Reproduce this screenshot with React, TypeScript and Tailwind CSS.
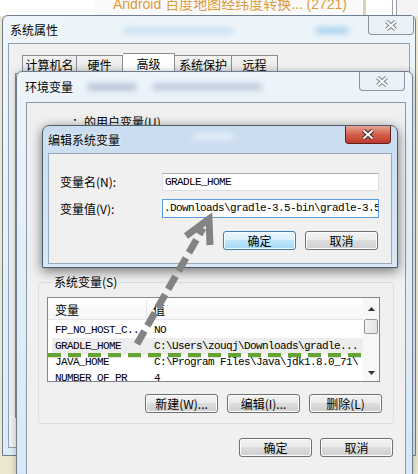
import React from 'react';

const CloseGlyph: React.FC<{ outline: string }> = ({ outline }) => (
  <svg width="14" height="11" viewBox="0 0 14 11">
    <path d="M2.5 1.5 L11.5 9.5 M11.5 1.5 L2.5 9.5" stroke={outline} strokeWidth="4" />
    <path d="M2.5 1.5 L11.5 9.5 M11.5 1.5 L2.5 9.5" stroke="#ffffff" strokeWidth="2" />
  </svg>
);

const Button: React.FC<{ label: string; primary?: boolean; h?: string }> = ({ label, primary, h = 'h-[19px]' }) => (
  <div
    className={
      primary
        ? `flex w-[73px] ${h} items-center justify-center rounded-[3px] border border-[#3c7fb1] bg-[linear-gradient(#eaf6fd_0%,#d9f0fc_45%,#bee6fd_50%,#a7d9f5_100%)] shadow-[inset_0_0_0_1px_#f4fbff] leading-none`
        : `flex w-[73px] ${h} items-center justify-center rounded-[3px] border border-[#707070] bg-[linear-gradient(#f2f2f2_0%,#ebebeb_45%,#dddddd_50%,#cfcfcf_100%)] shadow-[inset_0_0_0_1px_#fcfcfc] leading-none`
    }
  >
    {label}
  </div>
);

const rows = [
  { name: 'FP_NO_HOST_C..', value: 'NO' },
  { name: 'GRADLE_HOME', value: 'C:\\Users\\zouqj\\Downloads\\gradle...', selected: true },
  { name: 'JAVA_HOME', value: 'C:\\Program Files\\Java\\jdk1.8.0_71\\' },
  { name: 'NUMBER_OF_PR', value: '4' },
];

const mono = "font-['Liberation_Mono','Noto_Sans_CJK_SC',monospace] text-[11px] tracking-[-0.6px]";

export default function App() {
  return (
    <div className="relative flex h-[474px] w-[418px] flex-col overflow-hidden bg-[#ebe7d0] font-['Noto_Sans_CJK_SC',sans-serif] text-[12px] text-black">
      {/* desktop behind the windows */}
      <div className="flex h-[16px] bg-white">
        <div className="w-[95px]" />
        <div className="flex w-[268px] overflow-hidden bg-[#fafafa]">
          <span className="-mt-[4px] ml-[18px] font-['Liberation_Sans','Noto_Sans_CJK_SC',sans-serif] text-[14px] leading-[16px] text-[#dc9b3a]">
            Android 百度地图经纬度转换...
          </span>
          <span className="-mt-[4px] ml-auto mr-[16px] font-['Liberation_Sans',sans-serif] text-[14px] leading-[16px] text-[#dc9b3a]">
            (2721)
          </span>
        </div>
        <div className="w-[3px] bg-[#d9d3a9]" />
        <div className="w-[26px] bg-white" />
        <div className="w-px bg-[#9aa0a8]" />
        <div className="w-[3px] bg-white" />
        <div className="w-px bg-[#9aa0a8]" />
        <div className="flex-1 bg-[#f4f4f4]" />
      </div>
      <div className="flex-1" />

      {/* 系统属性 */}
      <div className="absolute left-[2px] top-[15px] flex h-[441px] w-[414px] flex-col rounded-t-[6px] border border-[#6e7e8e] bg-[linear-gradient(#eef5fa,#dcebf6)]">
        <div className="relative flex h-[27px] items-center pl-[7px]">
          <span className="[text-shadow:0_0_6px_#ffffff]">系统属性</span>
          <div className="absolute left-[120px] top-[12px] h-[5px] w-[110px] rounded-full bg-[#b8d8ee] blur-[3px]" />
          <div className="absolute left-[312px] top-[12px] h-[5px] w-[34px] rounded-full bg-[#8fc5ea] blur-[3px]" />
          <div className="absolute right-[1px] top-0 flex h-[19px] w-[46px] items-center justify-center rounded-b-[4px] border border-t-0 border-[#8a949e] bg-[#eaf2f8]">
            <CloseGlyph outline="#7a7f86" />
          </div>
        </div>
        <div className="mx-[5px] flex h-[405px] flex-col border border-[#8ea0b4] bg-[#f0f0f0] pt-[9px]">
          <div className="flex items-end pl-[13px]">
            <div className="flex h-[18px] w-[55px] items-center justify-center border border-b-0 border-[#898c95] bg-[linear-gradient(#f3f3f3,#e3e3e3)]">计算机名</div>
            <div className="flex h-[18px] w-[46px] items-center justify-center border border-b-0 border-l-0 border-[#898c95] bg-[linear-gradient(#f3f3f3,#e3e3e3)]">硬件</div>
            <div className="flex h-[20px] w-[52px] items-start justify-center border border-b-0 border-l-0 border-[#898c95] bg-white pt-[1px]">高级</div>
            <div className="flex h-[18px] w-[57px] items-center justify-center border border-b-0 border-l-0 border-[#898c95] bg-[linear-gradient(#f3f3f3,#e3e3e3)]">系统保护</div>
            <div className="flex h-[18px] w-[46px] items-center justify-center border border-b-0 border-l-0 border-[#898c95] bg-[linear-gradient(#f3f3f3,#e3e3e3)]">远程</div>
          </div>
          <div className="mx-[6px] h-[345px] border border-[#898c95] bg-white" />
        </div>
      </div>

      {/* 环境变量 */}
      <div className="absolute left-[16px] top-[71px] flex h-[405px] w-[397px] flex-col rounded-t-[6px] border border-[#6e7e8e] bg-[linear-gradient(#edf4fa,#d6e8f5)] shadow-[0_0_6px_rgba(0,0,0,0.25)]">
        <div className="relative flex h-[30px] items-center pl-[8px]">
          <span className="[text-shadow:0_0_6px_#ffffff]">环境变量</span>
          <div className="absolute left-[70px] top-[12px] h-[6px] w-[50px] rounded-full bg-[#7f93b0] opacity-60 blur-[3px]" />
          <div className="absolute left-[135px] top-[12px] h-[6px] w-[110px] rounded-full bg-[#7f93b0] opacity-50 blur-[3px]" />
          <div className="absolute right-[7px] top-0 flex h-[19px] w-[46px] items-center justify-center rounded-b-[4px] border border-t-0 border-[#8a949e] bg-[#eaf2f8]">
            <CloseGlyph outline="#7a7f86" />
          </div>
        </div>
        <div className="ml-[9px] mr-[6px] flex flex-1 flex-col border border-[#8a99aa] bg-[#f0f0f0]">
          <div className="h-[171px] pl-[45px] pt-[11px] leading-[16px]">：的用户变量(U)</div>
          <fieldset className="ml-[11px] w-[356px] rounded-[3px] border border-[#d5dfe5] px-[8px] pb-[10px] pt-[7px]">
            <legend className="ml-[5px] px-[2px] leading-[16px]">系统变量(S)</legend>
            <div className="flex h-[85px] w-[333px] overflow-hidden border border-[#828790] bg-white">
              <div className="flex flex-1 flex-col">
                <div className="flex h-[22px] shrink-0 items-center border-b border-[#e5e5e5] bg-[linear-gradient(#ffffff,#f5f6f7)] pt-[2px]">
                  <div className="flex h-full w-[99px] items-center border-r border-[#e5e5e5] pl-[7px]">变量</div>
                  <div className="pl-[6px]">值</div>
                </div>
                <div className="flex flex-col pt-[2px]">
                  {rows.map((r) => (
                    <div
                      key={r.name}
                      className={`ml-[4px] flex h-[16px] shrink-0 items-center whitespace-nowrap ${r.selected ? 'bg-[#ededed]' : ''} ${mono}`}
                    >
                      <div className="w-[102px] pl-[3px]">{r.name}</div>
                      <div>{r.value}</div>
                    </div>
                  ))}
                </div>
              </div>
              <div className="flex w-[16px] flex-col items-center bg-[#f7f7f7]">
                <div className="flex h-[21px] items-center">
                  <svg width="7" height="4" viewBox="0 0 7 4"><path d="M0 4 L3.5 0 L7 4 Z" fill="#333" /></svg>
                </div>
                <div className="h-[15px] w-[14px] rounded-[2px] border border-[#979797] bg-[linear-gradient(90deg,#f3f3f3,#e2e2e2)]" />
                <div className="flex-1" />
                <div className="flex h-[16px] items-center">
                  <svg width="7" height="4" viewBox="0 0 7 4"><path d="M0 0 L3.5 4 L7 0 Z" fill="#333" /></svg>
                </div>
              </div>
            </div>
            <div className="mt-[12px] flex justify-end gap-[9px] pr-[3px]">
              <Button label="新建(W)..." />
              <Button label="编辑(I)..." />
              <Button label="删除(L)" />
            </div>
          </fieldset>
          <div className="mt-[14px] flex justify-end gap-[8px] pr-[12px]">
            <Button label="确定" />
            <Button label="取消" />
          </div>
        </div>
      </div>

      {/* 编辑系统变量 */}
      <div className="absolute left-[42px] top-[125px] flex h-[143px] w-[356px] flex-col rounded-t-[7px] border border-[#4e5d6c] bg-[linear-gradient(#c9dcf0,#d9e7f4)] shadow-[0_3px_12px_rgba(0,0,0,0.55)]">
        <div className="relative flex h-[27px] items-center pl-[5px]">
          <span className="[text-shadow:0_0_6px_#ffffff]">编辑系统变量</span>
          <div className="absolute left-[150px] top-[8px] h-[5px] w-[40px] rounded-full bg-white opacity-70 blur-[3px]" />
          <div className="absolute right-[6px] top-0 flex h-[18px] w-[46px] items-center justify-center rounded-b-[4px] border border-t-0 border-[#5b2019] bg-[linear-gradient(#e8a595,#d2604c_50%,#c0392b)]">
            <CloseGlyph outline="#3a2020" />
          </div>
        </div>
        <div className="ml-[5px] flex h-[111px] w-[344px] flex-col border border-[#97a9bd] bg-[#f0f0f0] pt-[19px]">
          <div className="flex h-[18px] items-center pl-[11px]">
            <div className="w-[102px]">变量名(N):</div>
            <div className={`flex h-[18px] w-[217px] items-center overflow-hidden whitespace-nowrap border border-[#dbdfe6] border-t-[#abadb3] bg-white pl-[2px] ${mono}`}>
              GRADLE_HOME
            </div>
          </div>
          <div className="mt-[8px] flex h-[19px] items-center pl-[11px]">
            <div className="w-[102px]">变量值(V):</div>
            <div className={`flex h-[19px] w-[217px] items-center overflow-hidden whitespace-nowrap border border-[#569de5] bg-white pl-[1px] ${mono}`}>
              {'.Downloads\\gradle-3.5-bin\\gradle-3.5'}
            </div>
          </div>
          <div className="mt-[13px] flex justify-end gap-[9px] pr-[13px]">
            <Button label="确定" primary />
            <Button label="取消" />
          </div>
        </div>
      </div>

      {/* annotations */}
      <svg className="pointer-events-none absolute left-0 top-0" width="418" height="474" viewBox="0 0 418 474">
        <line x1="48" y1="356" x2="368" y2="356" stroke="rgba(0,0,0,0.12)" strokeWidth="4" strokeDasharray="13 7" />
        <line x1="48" y1="355" x2="368" y2="355" stroke="#64a532" strokeWidth="4" strokeDasharray="13 7" />
        <line x1="137" y1="344" x2="203" y2="228" stroke="#838383" strokeWidth="7" strokeDasharray="15 6" />
        <polyline points="186,236 209,219 210,245" fill="none" stroke="#838383" strokeWidth="7" strokeLinejoin="miter" />
      </svg>
    </div>
  );
}
